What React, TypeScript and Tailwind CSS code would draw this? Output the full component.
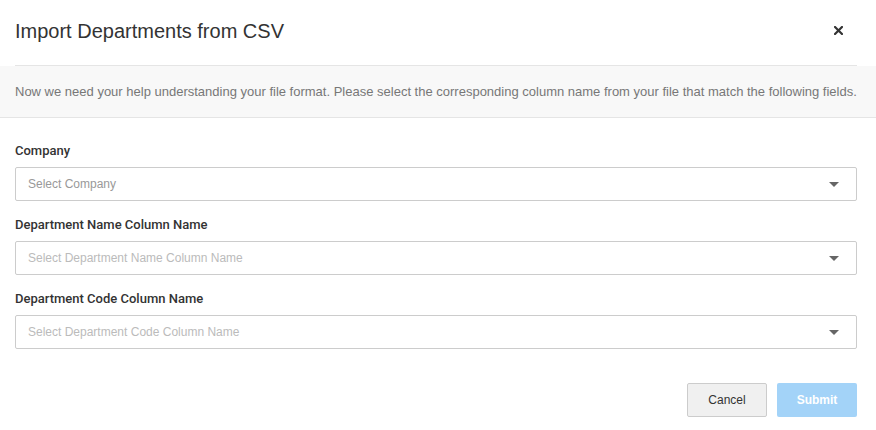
function Caret() {
  return (
    <svg width="10" height="5" viewBox="0 0 10 5" className="shrink-0">
      <path d="M0 0h10L5 5z" fill="#666" />
    </svg>
  )
}

function SelectField({ label, placeholder, dark }: { label: string; placeholder: string; dark?: boolean }) {
  return (
    <div className="flex flex-col">
      <label className="mb-[7px] font-['Roboto',Arial,sans-serif] text-[13px] leading-[18px] font-medium text-[#333]">{label}</label>
      <div className="flex h-[34px] items-center justify-between rounded-[2px] border border-[#ccc] bg-white pl-[12px] pr-[17px]">
        <span className={dark ? 'text-[12px] text-[#999]' : 'text-[12px] text-[#bbb]'}>{placeholder}</span>
        <Caret />
      </div>
    </div>
  )
}

export default function App() {
  return (
    <div className="h-[430px] w-[876px] bg-white font-['Liberation_Sans',Arial,sans-serif]">
      <div className="ml-[15px] mr-[19px] flex h-[66px] items-center justify-between border-b border-[#e5e5e5] pb-[4px]">
        <h1 className="text-[20px] leading-[24px] text-[#333]">Import Departments from CSV</h1>
        <svg width="9" height="9" viewBox="0 0 9 9" className="mr-[14px]">
          <path d="M1 1l7 7M8 1l-7 7" stroke="#333" strokeWidth="2.2" strokeLinecap="square" />
        </svg>
      </div>
      <div className="flex h-[52px] items-center border-b border-[#e5e5e5] bg-[#f8f8f8] px-[15px]">
        <p className="text-[13px] text-[#777]">
          Now we need your help understanding your file format. Please select the corresponding column name from your file that match the following fields.
        </p>
      </div>
      <div className="flex flex-col gap-[15px] pl-[15px] pr-[19px] pt-[24px]">
        <SelectField label="Company" placeholder="Select Company" dark />
        <SelectField label="Department Name Column Name" placeholder="Select Department Name Column Name" />
        <SelectField label="Department Code Column Name" placeholder="Select Department Code Column Name" />
      </div>
      <div className="mt-[34px] flex justify-end gap-[10px] px-[19px]">
        <button className="h-[34px] w-[80px] rounded-[2px] border border-[#ccc] bg-[#f0f0f0] text-[12px] text-[#333]">Cancel</button>
        <button className="h-[34px] w-[80px] rounded-[2px] bg-[#a3d3f8] text-[12px] font-bold text-white">Submit</button>
      </div>
    </div>
  )
}
